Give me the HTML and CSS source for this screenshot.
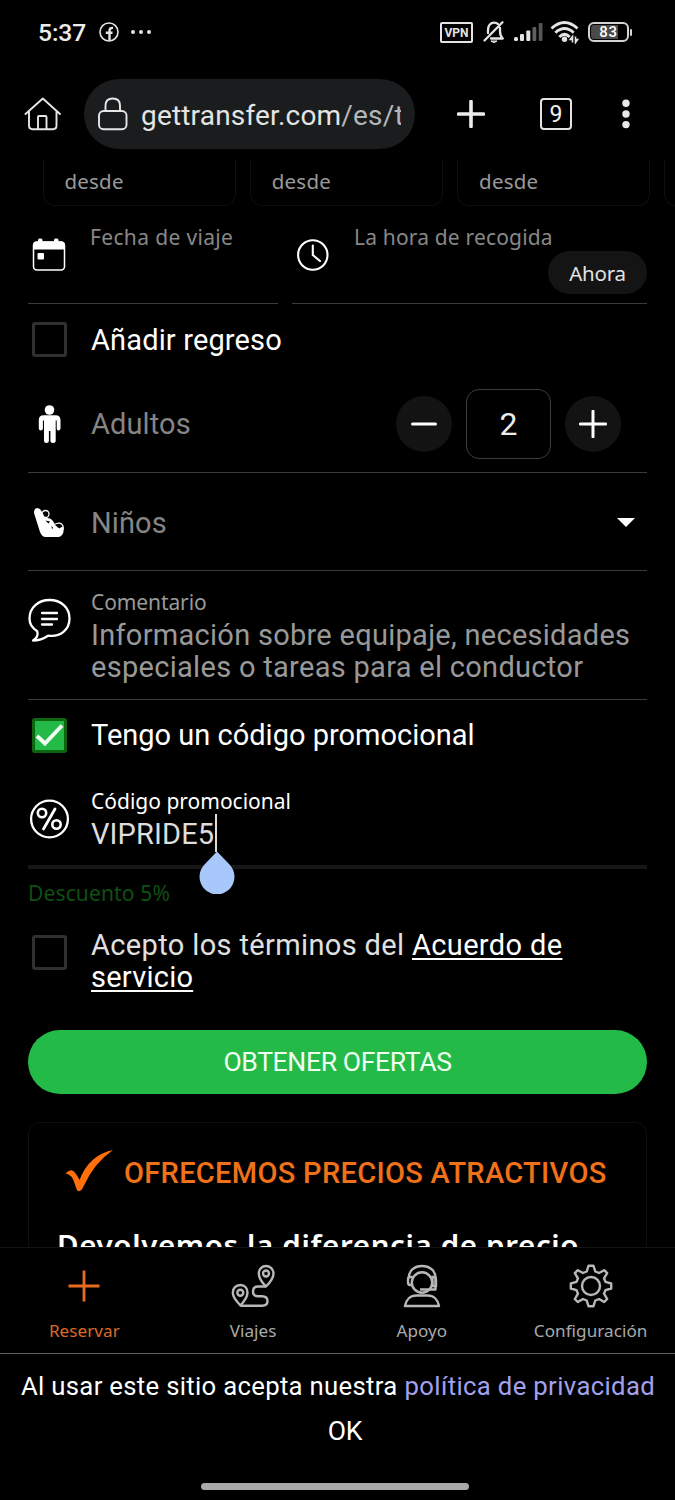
FILE: index.html
```html
<!DOCTYPE html>
<html lang="es">
<head>
<meta charset="utf-8">
<title>GetTransfer</title>
<link rel="stylesheet" href="styles.css">
</head>
<body>
<div class="screen">
  <header class="status">
    <span class="clock">5:37</span>
    <svg class="fb" width="20" height="20" viewBox="0 0 20 20"><circle cx="10" cy="10" r="9" fill="none" stroke="#e4e4e4" stroke-width="1.6"/><path d="M10.500 18.500V9.200C10.500 6.600 11.500 5.700 14 5.900M6.800 10.800H13.500" fill="none" stroke="#e4e4e4" stroke-width="2.400"/></svg>
    <svg class="more" width="20" height="6" viewBox="0 0 20 6" fill="#e4e4e4"><circle cx="2" cy="3" r="2"/><circle cx="10" cy="3" r="2"/><circle cx="18" cy="3" r="2"/></svg>
    <span class="vpn">VPN</span>
    <svg class="bell" width="24" height="24" viewBox="0 0 24 24" fill="none" stroke="#e4e4e4" stroke-width="2.300" stroke-linecap="round" stroke-linejoin="round"><path d="M6 13V10C6 5.500 8.500 2.600 12 2.600C13.500 2.600 14.800 3 15.800 3.900M18 8V11C18 15 18.600 16.500 20.800 18.500H9M20.500 2.300L2.500 20.500"/><path d="M9.200 21.300Q12 24 14.800 21.300Z" fill="#e4e4e4" stroke-width="1"/></svg>
    <svg class="signal" width="29" height="19" viewBox="0 0 29 19" fill="#e4e4e4"><rect y="14" width="4" height="4" rx="1.500"/><rect x="6" y="11" width="4" height="7" rx="1"/><rect x="12.300" y="7.500" width="4" height="10.500" rx="1"/><rect x="18.500" y="4" width="3.800" height="14" rx="1" fill="#606060"/><rect x="24.700" y="0" width="3.800" height="18" rx="1" fill="#555"/></svg>
    <svg class="wifi" width="30" height="24" viewBox="0 0 30 24" fill="none" stroke="#e4e4e4" stroke-width="2.900"><path d="M1.500 8.500Q14.500-3.500 27.500 8.500M5.300 12.700Q14.500 4.300 23.700 12.700M9.300 17Q14.500 11.800 19.700 17"/><circle cx="14.500" cy="19.300" r="2.700" fill="#e4e4e4" stroke="none"/><path d="M22.500 22.500V16.500L20.200 19.500H22.500M25.500 16.500V22.500L27.600 19.500H25.500" stroke-width="1.600"/></svg>
    <span class="battery"><span class="battery-text">83</span></span><i class="battery-cap"></i>
  </header>

  <div class="toolbar">
    <svg class="home" width="38" height="34" viewBox="0 0 38 34" fill="none" stroke="#e6e6e6" stroke-width="1.900" stroke-linecap="round" stroke-linejoin="round"><path d="M1.500 17L18.800 1.500L36 17M5 14V28.500Q5 32.200 8.700 32.200H29Q32.500 32.200 32.500 28.500V14M14 32V20Q14 19 15 19H21.500Q22.500 19 22.500 20V32"/></svg>
    <div class="omnibox">
      <svg width="30" height="34" viewBox="0 0 30 34" fill="none" stroke="#e6e6e6" stroke-width="1.900"><rect x="1" y="14" width="27.500" height="18.200" rx="4.500"/><path d="M7.500 14V8.500Q7.500 1.500 14.800 1.500Q22 1.500 22 8.500V14"/></svg>
      <span class="url">gettransfer.com<span class="path">/es/t</span></span>
    </div>
    <svg class="newtab" width="28" height="28" viewBox="0 0 28 28"><path d="M14 1.500V26.500M1.500 14H26.500" stroke="#ececec" stroke-width="3.600" stroke-linecap="round"/></svg>
    <span class="tabs">9</span>
    <svg class="menu" width="8" height="30" viewBox="0 0 8 30" fill="#e8e8e8"><circle cx="4" cy="4.200" r="3.700"/><circle cx="4" cy="15" r="3.700"/><circle cx="4" cy="25.600" r="3.700"/></svg>
  </div>

  <main class="page">
    <div class="cars"><div class="car">desde</div><div class="car">desde</div><div class="car">desde</div><div class="car"></div></div>

    <div class="dates">
      <div class="date">
        <svg class="calendar" width="34" height="34" viewBox="0 0 34 34"><rect x="1.500" y="4" width="31" height="28" rx="3.500" fill="none" stroke="#fff" stroke-width="1.500"/><path d="M1 11.500V7Q1 3.500 4.500 3.500H6V2Q6 .5 7.500 .5H9Q10.500 .5 10.500 2V3.500H22V2Q22 .5 23.500 .5H25Q26.500 .5 26.500 2V3.500H29.500Q33 3.500 33 7V11.500Z" fill="#fff"/><rect x="5.500" y="15" width="6.500" height="6.500" rx="1" fill="#fff"/></svg>
        <span class="label gray l-fecha">Fecha de viaje</span>
      </div>
      <div class="date time">
        <svg class="watch" width="34" height="34" viewBox="0 0 34 34" fill="none" stroke="#fff" stroke-width="2.100" stroke-linecap="round"><circle cx="16.800" cy="17" r="14.700"/><path d="M16.800 7.500V17L24 23"/></svg>
        <div class="time-body"><span class="label gray l-hora">La hora de recogida</span><button class="now">Ahora</button></div>
      </div>
    </div>

    <label class="row return"><span class="iconcol"><i class="check"></i></span><span class="text t-regreso">Añadir regreso</span></label>

    <div class="row line adults">
      <span class="iconcol"><svg width="36" height="40" viewBox="0 0 36 40" fill="#fff"><circle cx="17.500" cy="6" r="4.800"/><path d="M11.500 11.300H23.500Q28.500 11.300 28.500 16V24.500Q28.500 26.500 26.500 26.500Q24.700 26.500 24.700 24.500V16.500H23.700V37Q23.700 39 21 39Q18.400 39 18.400 37V27H16.900V37Q16.900 39 14.400 39Q12 39 12 37V16.500H10.900V24.500Q10.900 26.500 9 26.500Q6.800 26.500 6.800 24.500V16Q6.800 11.300 11.500 11.300Z"/></svg></span>
      <span class="text dim t-adultos">Adultos</span>
      <div class="stepper">
        <button class="round"><svg width="28" height="28" viewBox="0 0 28 28"><path d="M2.500 14H25.500" stroke="#fff" stroke-width="3" stroke-linecap="round"/></svg></button>
        <span class="count">2</span>
        <button class="round"><svg width="28" height="28" viewBox="0 0 28 28"><path d="M1.200 14H26.800M14 1.200V26.800" stroke="#fff" stroke-width="3" stroke-linecap="round"/></svg></button>
      </div>
    </div>

    <div class="row line kids">
      <span class="iconcol seat"><svg width="32" height="32" viewBox="0 0 32 32"><path d="M1 6Q1 1 4.500 1Q7.500 1.500 9 5L12 10.500L17 11.500Q21 14 21.500 17.500L25 20.500L30.500 20V25Q29 30 25 30H12.500Q9 30 7 25Z" fill="#fff"/><g fill="none" stroke="#fff" stroke-width="1.300"><circle cx="12.500" cy="7" r="3.500"/><path d="M21 17.500Q28 14 30 19V23"/></g><path d="M12.500 13.500L17 14.500L15.500 16.500ZM18.500 19L20 20.500L19 22.500ZM24.500 20H28L26.500 21.500Z" fill="#000"/></svg></span>
      <span class="text dim t-ninos">Niños</span>
      <i class="caret-down"></i>
    </div>

    <div class="row line comment">
      <span class="iconcol left"><svg width="44" height="46" viewBox="0 0 44 46" fill="none" stroke="#fff" stroke-width="2.300" stroke-linecap="round" stroke-linejoin="round"><path d="M5 43.500Q11 40 9.200 34.200C4 31 1.500 26.500 1.500 21.500C1.500 10.500 10.500 3 21.500 3C33 3 41.500 10.500 41.500 21.500C41.500 32.500 32.500 40.500 20 38.700Q13 43.500 5 43.500Z"/><path d="M14 16H29M14 22H29M14 27.500H24"/></svg></span>
      <div class="field"><span class="label note l-comentario">Comentario</span><span class="text note t-info">Información sobre equipaje, necesidades</span><span class="text note t-esp">especiales o tareas para el conductor</span></div>
    </div>

    <label class="row promo-toggle"><span class="iconcol"><i class="check on"><svg width="29" height="29" viewBox="0 0 29 29"><path d="M2 15L10 22.500L27 4.500" fill="none" stroke="#f4fff4" stroke-width="3.900"/></svg></i></span><span class="text t-tengo">Tengo un código promocional</span></label>

    <div class="row promo">
      <span class="iconcol left"><svg width="42" height="42" viewBox="0 0 42 42" fill="none" stroke="#fff" stroke-width="2.300" stroke-linecap="round"><circle cx="21.500" cy="21" r="18.400"/><circle cx="14" cy="15" r="4.200" stroke-width="2.600"/><circle cx="28.500" cy="26.500" r="4.200" stroke-width="2.600"/><path d="M27 11L15.500 31" stroke-width="2.800"/></svg></span>
      <div class="field"><span class="label l-codigo">Código promocional</span>
        <span class="value"><span class="text soft t-vip">VIPRIDE5</span><i class="cursor"></i><svg class="handle" width="36" height="43" viewBox="0 0 36 43"><path d="M18 .5L30.500 13.500A17.500 17.500 0 1 1 5.500 13.500Z" fill="#a8c7fa"/></svg></span>
      </div>
    </div>
    <p class="discount">Descuento 5%</p>

    <div class="row terms"><span class="iconcol"><i class="check"></i></span><p class="agree">Acepto los términos del <a>Acuerdo de</a><br><a class="svc">servicio</a></p></div>

    <button class="submit">OBTENER OFERTAS</button>

    <section class="offer">
      <h2 class="offer-head"><svg width="50" height="44" viewBox="0 0 50 44" fill="#ff6f0c"><path d="M.5 24.500Q6 19 9.500 23Q12 26 14.500 31Q24 6 48 1Q29 14 18.500 37.500Q16 43 13 42Q11.500 41 10 35.500Q7 25 .5 24.500Z"/></svg><span>OFRECEMOS PRECIOS ATRACTIVOS</span></h2>
      <p class="offer-text">Devolvemos la diferencia de precio</p>
    </section>
  </main>

  <nav class="nav">
    <a class="tab active"><svg width="44" height="44" viewBox="0 0 44 44"><path d="M22 6.500V37.500M6.500 22H37.500" stroke="#e96b1f" stroke-width="2.800"/></svg><span>Reservar</span></a>
    <a class="tab"><svg width="44" height="44" viewBox="0 0 44 44" fill="none" stroke="#b8b8b8" stroke-width="2.400" stroke-linejoin="round"><path d="M35 22.500C31 18.500 27.800 14 27.800 9.500C27.800 5 31 2 35 2C39 2 42.500 5 42.500 9.500C42.500 14 39 18.500 35 22.500Z"/><circle cx="35" cy="9.500" r="3"/><path d="M9.500 41.500C5 37 1.800 33 1.800 28.800C1.800 24.300 5 21 9.500 21C14 21 16.500 24.300 16.500 28.800C16.500 33 13.500 37 9.500 41.500Z"/><circle cx="9.300" cy="28.700" r="3"/><path d="M9.500 41.700H31Q36.500 41.700 36.500 37Q36.500 32.200 31 32.200H27Q22 32.200 22 27.500Q22 22.500 27 22.500H35"/></svg><span>Viajes</span></a>
    <a class="tab"><svg width="44" height="44" viewBox="0 0 44 44" fill="none" stroke="#b8b8b8" stroke-width="2.400" stroke-linejoin="round"><path d="M8.800 14C8.800 6.500 14.500 2 22 2C29.500 2 35.500 6.500 35.500 14V25.500H20"/><circle cx="22" cy="18.500" r="10.200"/><path d="M12.500 13H10Q8 13 8 16V18Q8 21 10 21H13M31.500 13H34Q36 13 36 16V22H32.500V14M5 42C6 35.500 10.500 31.500 16.500 31.500H27.500C33.500 31.500 38 35.500 39 42Z"/></svg><span>Apoyo</span></a>
    <a class="tab"><svg width="44" height="44" viewBox="0 0 44 44" fill="none" stroke="#b8b8b8" stroke-width="2.400" stroke-linejoin="round"><circle cx="22" cy="22" r="9"/><path d="M19.500 1.800H24.500L26.300 7.500L30 9L35.200 6.200L38.200 9.200L35 14.300L36.500 17.800L42.200 19.500V24.500L36.500 26.200L35 29.700L38.200 35L35.200 38L30 35L26.300 36.500L24.500 42.200H19.500L17.700 36.500L14 35L8.800 38L5.800 35L9 29.700L7.500 26.200L1.800 24.500V19.500L7.500 17.800L9 14.300L5.800 9.200L8.800 6.200L14 9L17.700 7.500Z"/></svg><span>Configuración</span></a>
  </nav>

  <footer class="cookies">
    <p class="cookie-text"><span class="msg">Al usar este sitio acepta nuestra</span><a class="policy">política de privacidad</a></p>
    <button class="ok">OK</button>
    <i class="home-bar"></i>
  </footer>
</div>
</body>
</html>
```
FILE: styles.css
```css
* { box-sizing: border-box; }
body { margin: 0; background: #000; color: #fff; font-family: Roboto, "Noto Sans", sans-serif; }
p, h2 { margin: 0; font-weight: 400; }
button { border: 0; padding: 0; color: inherit; font-family: inherit; background: none; }
svg { display: block; flex: none; }
.screen { display: flex; flex-direction: column; width: 675px; height: 1500px; overflow: hidden; background: #000; }

/* Status bar */
.status { display: flex; align-items: center; height: 66px; padding: 0 0 2px 38px; flex: none; }
.clock { width: 61px; font-size: 24.700px; font-weight: 500; letter-spacing: -.1px; color: #ececec; }
.more { margin-left: 12px; }
.vpn { margin-left: 289px; width: 33px; height: 21px; border: 2px solid #e4e4e4; border-radius: 2px; font-size: 12px; line-height: 18px; font-weight: 700; text-align: center; color: #e4e4e4; }
.bell { margin-left: 9px; }
.signal { margin-left: 8px; }
.wifi { margin-left: 7px; }
.battery { margin-left: 8px; width: 41px; height: 20px; padding: 1px; border: 2px solid #d4d4d4; border-radius: 6px; background: linear-gradient(90deg, #4a4a4a 78%, #000 78%) content-box; color: #fff; text-align: center; line-height: 15px; font-size: 15px; font-weight: 500; }
.battery-text { letter-spacing: .6px; }
.battery-cap { width: 2px; height: 7px; margin-left: 1px; background: #d4d4d4; border-radius: 1px; }

/* Browser toolbar */
.toolbar { display: flex; align-items: center; height: 94px; padding: 2px 0 0 24px; flex: none; }
.omnibox { display: flex; align-items: center; width: 331px; height: 70px; margin-left: 22px; padding-left: 14px; border-radius: 35px; background: #1b1c1e; }
.url { width: 260px; margin: 4px 0 0 13px; font-size: 28px; line-height: 36px; letter-spacing: .18px; color: #e4e4e4; white-space: nowrap; overflow: hidden; }
.path { color: #b4b6b8; }
.newtab { margin-left: 42px; }
.tabs { margin-left: 55px; width: 32px; height: 32px; border: 2px solid #e4e4e4; border-radius: 4px; text-align: center; font-size: 23px; line-height: 29px; color: #f0f0f0; }
.menu { margin-left: 50px; }

/* Booking form */
.page { height: 1087px; overflow: hidden; flex: none; }
.cars { display: flex; gap: 14.300px; height: 46px; padding-left: 42.500px; overflow: hidden; }
.car { flex: none; width: 193px; padding: 9px 0 0 21px; border: 1px solid #0f0f0f; border-top: 0; border-radius: 0 0 12px 12px; font: 20.500px/24px "Noto Sans", sans-serif; letter-spacing: .2px; color: #999; }
.dates { display: flex; gap: 14px; height: 98px; padding: 0 28px; }
.date { display: flex; width: 250px; padding-top: 19px; border-bottom: 1px solid #3a3a3a; }
.calendar, .watch { margin: 13px 24px 0 4px; }
.time { width: 355px; }
.time-body { display: flex; flex-direction: column; flex: 1; }
.label { font: 21px/24px "Noto Sans", sans-serif; white-space: nowrap; color: #fff; }
.gray { color: #888; }
.note { color: #999; }
.now { align-self: flex-end; width: 99px; height: 43px; margin-top: 2px; border-radius: 22px; background: #141414; font: 20.500px/44px "Noto Sans", sans-serif; letter-spacing: -.2px; color: #e2e2e2; }
.row { display: flex; align-items: center; margin: 0 28px; }
.iconcol { flex: none; display: flex; justify-content: center; width: 43px; margin-right: 20px; }
.left { justify-content: flex-start; }
.text { font-size: 29px; line-height: 32px; white-space: nowrap; }
.dim { color: #858585; }
.soft { color: #ddd; }
.line { border-bottom: 1px solid #3a3a3a; }
.return { height: 71px; }
.check { display: block; width: 35px; height: 35px; border: 3px solid #303030; border-radius: 3px; }
.on { background: #23ba48; border-color: #0e6510; }
.adults { height: 98px; }
.stepper { display: flex; align-items: center; gap: 14px; margin: 0 26px 0 auto; }
.round { display: flex; align-items: center; justify-content: center; width: 56px; height: 56px; border-radius: 50%; background: #131313; }
.count { width: 85px; height: 70px; border: 1px solid #3d3d3d; border-radius: 13px; text-align: center; font-size: 32px; line-height: 69px; color: #ececec; }
.kids { height: 98px; padding-top: 2px; }
.seat { padding-right: 1px; }
.caret-down { margin: 0 12px 0 auto; border: 9px solid transparent; border-top-color: #fff; border-bottom: 0; }
.comment { height: 129px; align-items: flex-start; padding-top: 19px; }
.comment .iconcol { margin-top: 7px; }
.field { display: flex; flex-direction: column; }
.field .label { margin-bottom: 5px; }
.promo-toggle { height: 70px; }
.promo { height: 99px; padding-top: 19px; align-items: flex-start; border-bottom: 4px solid #161616; }
.promo .iconcol { margin-top: 9px; }
.value { position: relative; display: flex; }
.cursor { width: 2px; height: 38px; margin: -4px 0 0 1px; background: #e0ddd8; }
.handle { position: absolute; left: 108px; top: 33px; }
.discount { margin: 12px 28px 0; font: 21px/24px "Noto Sans", sans-serif; letter-spacing: .14px; color: #0e5012; }
.terms { margin-top: 24px; align-items: flex-start; }
.terms .iconcol { margin-top: 6px; }
.agree { font-size: 29px; line-height: 32px; letter-spacing: .36px; white-space: nowrap; color: #e0e0e0; }
.agree a { color: #fff; text-decoration: underline; text-decoration-thickness: 2px; text-underline-offset: 3px; }
.agree .svc { letter-spacing: .24px; }
.submit { display: block; width: 619px; height: 64px; margin: 37px 28px 0; border-radius: 32px; background: #23ba48; font-size: 26.600px; letter-spacing: -.39px; line-height: 62px; color: #effff0; }

/* Offer card */
.offer { height: 200px; margin: 28px 28px 0; padding: 27px 0 0 30px; border: 1px solid #0f0f0f; border-radius: 12px; }
.offer-head { display: flex; align-items: center; height: 45px; padding-left: 6px; font-size: 29px; font-weight: 500; letter-spacing: .31px; color: #ef7118; white-space: nowrap; }
.offer-head svg { margin: -4px 9px 0 0; }
.offer-text { margin: 34px 0 0 -2px; font: 600 29.500px/32px "Noto Sans", sans-serif; letter-spacing: .64px; white-space: nowrap; }

/* Per-string tracking */
.l-fecha { letter-spacing: .35px; }
.l-hora { letter-spacing: .17px; }
.l-comentario { letter-spacing: -.1px; }
.t-regreso { letter-spacing: .15px; }
.t-adultos { letter-spacing: .1px; }
.t-ninos { letter-spacing: .1px; }
.t-info { letter-spacing: .28px; }
.t-esp { letter-spacing: .3px; }
.t-vip { letter-spacing: .12px; }

/* Bottom navigation */
.nav { display: flex; height: 107px; flex: none; border-top: 1px solid #141414; border-bottom: 1px solid #606060; background: #000; }
.tab { flex: 1 0 0; display: flex; flex-direction: column; align-items: center; padding-top: 16px; font: 17.100px/20px "Noto Sans", sans-serif; letter-spacing: .06px; color: #aaa; }
.tab span { margin-top: 13px; }
.tab.active { color: #dd6a25; }

/* Cookie notice */
.cookies { display: flex; flex-direction: column; align-items: center; height: 146px; padding-top: 16px; flex: none; }
.cookie-text { align-self: flex-start; display: flex; gap: 7px; margin-left: 21px; font-size: 25.700px; line-height: 32px; white-space: nowrap; }
.msg { letter-spacing: .31px; }
.policy { letter-spacing: .35px; color: #a3a0ee; }
.ok { margin: 13px 0 0 15px; font-size: 26.600px; line-height: 32px; letter-spacing: -.3px; }
.home-bar { width: 268px; height: 7px; margin: 36px 5px 0 0; border-radius: 4px; background: #aaa; }
```
